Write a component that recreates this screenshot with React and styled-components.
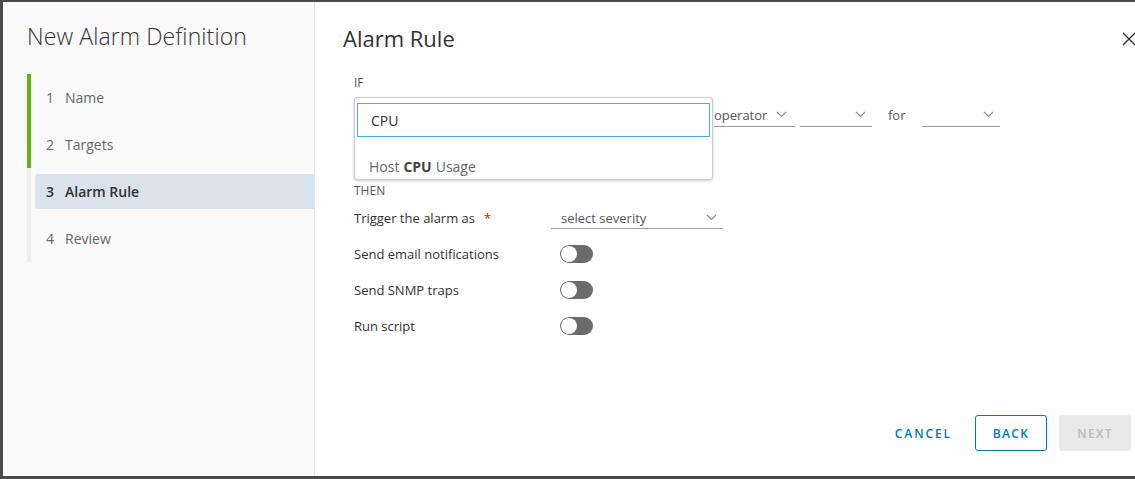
import React from 'react';
import styled, { createGlobalStyle } from 'styled-components';

const GlobalStyle = createGlobalStyle`
    html, body {
        margin: 0;
        padding: 0;
        background: #4a4a4a;
        font-family: 'Open Sans', 'Liberation Sans', sans-serif;
    }
    * { box-sizing: border-box; }
`

const Screen = styled.div`
    width: 1135px;
    height: 479px;
    padding: 2px 0 3px 3px;
    display: flex;
`

const Modal = styled.div`
    flex: 1;
    display: flex;
    background: #ffffff;
    overflow: hidden;
`

const Sidebar = styled.div`
    width: 312px;
    background: #fafafa;
    border-right: 1px solid #e3e3e3;
    padding: 17px 0 0 24px;
`

const Title = styled.h1`
    margin: 0;
    font-size: 23px;
    font-weight: 300;
    color: #313131;
    letter-spacing: 0.1px;
    height: 34px;
    line-height: 34px;
`

const Steps = styled.div`
    margin-top: 21px;
    display: flex;
    flex-direction: column;
`

const Step = styled.div`
    height: 47px;
    display: flex;
    align-items: center;
    padding-left: 4px;
    border-left: 4px solid ${props => props.done ? '#60b515' : '#eeeeee'};
    span {
        height: 35px;
        flex: 1;
        display: flex;
        align-items: center;
        padding-left: 11px;
        border-radius: 3px 0 0 3px;
        font-size: 14px;
        color: ${props => props.active ? '#313131' : '#666666'};
        font-weight: ${props => props.active ? 600 : 400};
        background: ${props => props.active ? '#dae3ec' : 'transparent'};
    }
    b {
        font-weight: inherit;
        margin-right: 11px;
    }
`

const Content = styled.div`
    flex: 1;
    display: flex;
    flex-direction: column;
    padding: 19px 0 0 28px;
`

const Header = styled.div`
    display: flex;
    justify-content: space-between;
    align-items: center;
    height: 34px;
    h2{
        margin: 0;
        font-size: 22px;
        font-weight: 400;
        color: #313131;
    }
`

const Close = styled.div`
    width: 18px;
    margin-right: -4px;
    margin-top: 2px;
    display: flex;
`

const Form = styled.div`
    padding-left: 11px;
    display: flex;
    flex-direction: column;
`

const Section = styled.div`
    font-size: 12px;
    color: #565656;
    height: 18px;
    line-height: 18px;
    margin-top: ${props => props.top}px;
`

const ConditionRow = styled.div`
    position: relative;
    height: 40px;
    margin-top: 5px;
    display: flex;
    align-items: flex-start;
    padding-left: 360px;
    gap: 5px;
`

const Select = styled.div`
    width: ${props => props.w}px;
    height: ${props => props.h || 24}px;
    border-bottom: 1px solid #9a9a9a;
    display: flex;
    align-items: center;
    justify-content: space-between;
    font-size: 13px;
    color: #565656;
    padding: 0 ${props => props.pr || 6}px 0 ${props => props.pl || 0}px;
    margin-top: ${props => props.mt || 0}px;
`

const ForLabel = styled.span`
    font-size: 13px;
    color: #565656;
    line-height: 24px;
    margin: 6px 11px 0 11px;
`

const Popup = styled.div`
    position: absolute;
    left: 0;
    top: 0;
    width: 359px;
    height: 83px;
    background: #fff;
    border: 1px solid #cccccc;
    border-radius: 3px;
    box-shadow: 0 1px 3px rgba(0,0,0,0.2);
    padding: 5px 2px 0 2px;
    z-index: 2;
`

const SearchBox = styled.div`
    height: 34px;
    border: 1px solid #49afd9;
    padding-left: 13px;
    display: flex;
    align-items: center;
    font-size: 14px;
    color: #313131;
`

const Option = styled.div`
    height: 42px;
    padding: 16px 0 0 12px;
    display: flex;
    align-items: center;
    font-size: 14px;
    color: #666;
    b { font-weight: 700; color: #444; margin: 0 4px; }
`

const Rows = styled.div`
    display: flex;
    flex-direction: column;
`

const Row = styled.div`
    display: grid;
    grid-template-columns: 197px auto;
    align-items: center;
    height: 36px;
    font-size: 13px;
    color: #313131;
    em { color: #c92100; font-style: normal; margin-left: 9px; }
`

const Toggle = styled.div`
    margin-left: 9px;
    width: 33px;
    height: 18px;
    border-radius: 9px;
    background: #6b6b6b;
    position: relative;
    &::after{
        content: '';
        position: absolute;
        left: 1px;
        top: 1px;
        width: 16px;
        height: 16px;
        border-radius: 50%;
        background: #fff;
    }
`

const Footer = styled.div`
    margin-top: auto;
    display: flex;
    justify-content: flex-end;
    align-items: center;
    gap: 12px;
    padding: 0 4px 25px 0;
`

const Button = styled.button`
    height: 36px;
    min-width: ${props => props.flat ? 0 : 72}px;
    padding: ${props => props.flat ? '0 2px 0 8px' : '0 12px'};
    font-family: 'Open Sans', 'Liberation Sans', sans-serif;
    font-size: 12px;
    font-weight: 600;
    letter-spacing: ${props => props.flat ? 1.9 : 1.3}px;
    border-radius: 3px;
    background: ${props => props.disabled ? '#e9e9e9' : 'transparent'};
    color: ${props => props.disabled ? '#b8b8b8' : '#0079b8'};
    border: 1px solid ${props => props.outline ? '#0079b8' : 'transparent'};
    margin-left: ${props => props.gap || 0}px;
`

function Chevron(){
    return(
        <svg width="11" height="7" viewBox="0 0 11 7">
            <path d="M1 1 L5.5 5.5 L10 1" stroke="#8a8a8a" strokeWidth="1.1" fill="none"/>
        </svg>
    )
}

export default function App(){
    const steps = [
        {n: 1, label: 'Name', done: true},
        {n: 2, label: 'Targets', done: true},
        {n: 3, label: 'Alarm Rule', active: true},
        {n: 4, label: 'Review'},
    ]
    const rows = ['Send email notifications', 'Send SNMP traps', 'Run script']

    return(
        <Screen>
            <GlobalStyle />
            <Modal>
                <Sidebar>
                    <Title>New Alarm Definition</Title>
                    <Steps>
                        {steps.map(step =>
                            <Step key={step.n} done={step.done} active={step.active}>
                                <span><b>{step.n}</b>{step.label}</span>
                            </Step>
                        )}
                    </Steps>
                </Sidebar>
                <Content>
                    <Header>
                        <h2>Alarm Rule</h2>
                        <Close>
                            <svg width="16" height="16" viewBox="0 0 16 16">
                                <path d="M2 2 L14 14 M14 2 L2 14" stroke="#313131" strokeWidth="1.4"/>
                            </svg>
                        </Close>
                    </Header>
                    <Form>
                        <Section top={19}>IF</Section>
                        <ConditionRow>
                            <Popup>
                                <SearchBox>CPU</SearchBox>
                                <Option>Host<b>CPU</b>Usage</Option>
                            </Popup>
                            <Select w={81} pr={8} mt={6}>operator<Chevron /></Select>
                            <Select w={72} pr={6} mt={6}><span></span><Chevron /></Select>
                            <ForLabel>for</ForLabel>
                            <Select w={78} pr={6} mt={6}><span></span><Chevron /></Select>
                        </ConditionRow>
                        <Section top={45}>THEN</Section>
                        <Rows>
                            <Row>
                                <span>Trigger the alarm as<em>*</em></span>
                                <Select w={172} h={22} pl={10} pr={6}>select severity<Chevron /></Select>
                            </Row>
                            {rows.map(r =>
                                <Row key={r}>
                                    <span>{r}</span>
                                    <Toggle />
                                </Row>
                            )}
                        </Rows>
                    </Form>
                    <Footer>
                        <Button flat>CANCEL</Button>
                        <Button outline gap={8}>BACK</Button>
                        <Button disabled>NEXT</Button>
                    </Footer>
                </Content>
            </Modal>
        </Screen>
    )
}
